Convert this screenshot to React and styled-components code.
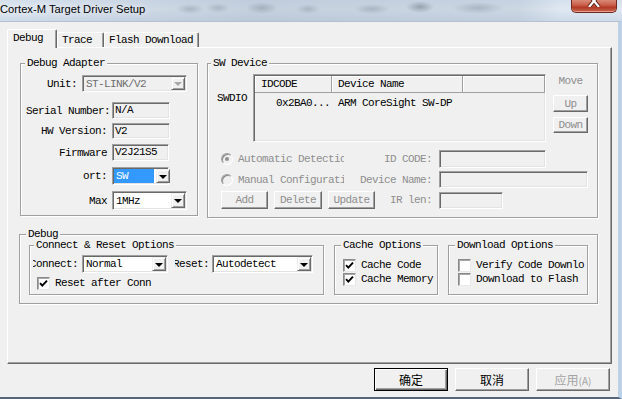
import React from "react";
import styled, { createGlobalStyle } from "styled-components";

const GlobalStyle = createGlobalStyle`
  html, body {
    margin: 0;
    padding: 0;
    background: #f0f0f0;
  }
  body {
    width: 622px;
    height: 399px;
    overflow: hidden;
  }
`;

const mono = `"Liberation Mono", "DejaVu Sans Mono", monospace`;
const cjk = `"Noto Sans CJK SC", "Liberation Sans", sans-serif`;
const grayText = "#8e8e8e";

const Window = styled.div`
  width: 622px;
  height: 399px;
  display: flex;
  flex-direction: column;
  overflow: hidden;
  font-family: ${mono};
  font-size: 11px;
  letter-spacing: -0.6px;
  color: #000;
`;

const TitleBar = styled.div`
  height: 21px;
  flex: none;
  display: flex;
  align-items: flex-start;
  background:
    radial-gradient(ellipse 14px 5px at 190px 9px, rgba(90, 100, 115, 0.28), transparent),
    radial-gradient(ellipse 12px 5px at 218px 8px, rgba(90, 100, 115, 0.25), transparent),
    radial-gradient(ellipse 16px 6px at 262px 8px, rgba(90, 100, 115, 0.3), transparent),
    radial-gradient(ellipse 12px 5px at 308px 9px, rgba(90, 100, 115, 0.25), transparent),
    radial-gradient(ellipse 18px 5px at 372px 9px, rgba(90, 100, 115, 0.28), transparent),
    radial-gradient(ellipse 14px 6px at 420px 7px, rgba(60, 70, 85, 0.35), transparent),
    radial-gradient(ellipse 26px 6px at 478px 8px, rgba(90, 100, 115, 0.28), transparent),
    linear-gradient(90deg, rgba(255, 255, 255, 0) 0, rgba(150, 165, 185, 0.25) 170px, rgba(150, 165, 185, 0.35) 250px, rgba(150, 165, 185, 0.25) 520px, rgba(255, 255, 255, 0) 560px),
    linear-gradient(180deg, #d6e1ee 0%, #dfe8f2 45%, #cfdbea 100%);
`;

const Title = styled.div`
  font-family: "Liberation Sans", "Noto Sans", sans-serif;
  font-size: 11.2px;
  letter-spacing: 0;
  line-height: 18px;
  color: #000;
  text-shadow: 0 0 6px rgba(255, 255, 255, 0.95);
`;

const CloseButton = styled.div`
  margin-left: auto;
  margin-right: 5px;
  width: 46px;
  height: 13px;
  box-sizing: border-box;
  border: 1px solid #6e2a22;
  border-top: none;
  border-radius: 0 0 5px 5px;
  background: linear-gradient(180deg, #d98a78 0%, #c75a44 45%, #b23a26 60%, #c8664f 100%);
  box-shadow: inset 0 -1px 0 rgba(255, 200, 180, 0.6);
  display: flex;
  justify-content: center;
  overflow: hidden;
`;

const Body = styled.div`
  flex: 1;
  display: flex;
  flex-direction: column;
  background: #f0f0f0;
  border-top: 1px solid #b4c1d0;
  border-right: 4px solid #bcd0e6;
  border-bottom: 2px solid #56657a;
  padding: 7px 6px 0 7px;
`;

const Tabs = styled.div`
  display: flex;
  align-items: flex-end;
  height: 18px;
  position: relative;
  z-index: 1;
`;

const Tab = styled.div`
  box-sizing: border-box;
  width: ${(p) => p.$w}px;
  height: ${(p) => (p.$active ? 19 : 15)}px;
  margin-bottom: ${(p) => (p.$active ? -1 : 0)}px;
  padding-left: ${(p) => p.$pad}px;
  line-height: ${(p) => (p.$active ? 17 : 14)}px;
  background: #f0f0f0;
  border: 1px solid;
  border-color: #fff #696969 transparent #fff;
  border-bottom: none;
  border-radius: 2px 2px 0 0;
  box-shadow: inset -1px 0 0 #a0a0a0;
  white-space: nowrap;
`;

const Panel = styled.div`
  box-sizing: border-box;
  width: 605px;
  height: 317px;
  border: 1px solid;
  border-color: #fff #696969 #696969 #fff;
  box-shadow: inset -1px -1px 0 #a0a0a0;
  display: flex;
  flex-direction: column;
`;

const TopRow = styled.div`
  display: flex;
  align-items: flex-start;
  gap: 9px;
  margin: 15px 0 0 12px;
`;

const Group = styled.div`
  box-sizing: border-box;
  width: ${(p) => p.$w}px;
  height: ${(p) => p.$h}px;
  flex: none;
  border: 1px solid #a0a0a0;
  box-shadow: inset 1px 1px 0 #fff, 1px 1px 0 #fff;
  display: flex;
  flex-direction: column;
`;

const Legend = styled.div`
  align-self: flex-start;
  margin: -7px 0 -5px ${(p) => p.$x}px;
  padding: 0 2px;
  height: 12px;
  line-height: 12px;
  background: #f0f0f0;
  white-space: nowrap;
`;

const FieldRow = styled.div`
  display: flex;
  align-items: center;
  margin-top: ${(p) => p.$top}px;
  margin-left: ${(p) => p.$left || 0}px;
  gap: ${(p) => p.$gap || 0}px;
`;

const Label = styled.div`
  width: ${(p) => p.$w}px;
  flex: none;
  text-align: right;
  white-space: nowrap;
  color: ${(p) => (p.$disabled ? grayText : "#000")};
`;

const ClipLabel = styled.div`
  width: ${(p) => p.$w}px;
  margin-left: ${(p) => p.$ml}px;
  flex: none;
  display: flex;
  justify-content: flex-end;
  overflow: hidden;
  white-space: nowrap;
`;

const Sunken = styled.div`
  box-sizing: border-box;
  width: ${(p) => p.$w}px;
  height: ${(p) => p.$h}px;
  margin-left: ${(p) => p.$ml || 0}px;
  flex: none;
  border: 1px solid;
  border-color: #a0a0a0 #fff #fff #a0a0a0;
  box-shadow: inset 1px 1px 0 #696969, inset -1px -1px 0 #e3e3e3;
`;

const TextField = styled(Sunken)`
  background: #f0f0f0;
  padding-left: 2px;
  line-height: ${(p) => p.$h - 2}px;
  white-space: nowrap;
  overflow: hidden;
`;

const ComboBox = styled(Sunken)`
  display: flex;
  align-items: stretch;
  padding: 1px;
  background: ${(p) => (p.$disabled ? "#f0f0f0" : "#fff")};
`;

const ComboText = styled.div`
  flex: ${(p) => (p.$sel ? "none" : 1)};
  width: ${(p) => (p.$sel ? "38px" : "auto")};
  margin-right: ${(p) => (p.$sel ? 2 : 0)}px;
  padding-left: 2px;
  white-space: nowrap;
  overflow: hidden;
  display: flex;
  align-items: center;
  background: ${(p) => (p.$sel ? "#3399ff" : "transparent")};
  color: ${(p) => (p.$sel ? "#fff" : p.$disabled ? "#6d6d6d" : "#000")};
`;

const DropArrow = styled.div`
  box-sizing: border-box;
  width: 14px;
  margin-left: auto;
  flex: none;
  background: #f0f0f0;
  border: 1px solid;
  border-color: #f0f0f0 #696969 #696969 #f0f0f0;
  box-shadow: inset 1px 1px 0 #fff, inset -1px -1px 0 #a0a0a0;
  display: flex;
  align-items: center;
  justify-content: center;

  &::after {
    content: "";
    border-left: 4px solid transparent;
    border-right: 4px solid transparent;
    border-top: 4px solid ${(p) => (p.$disabled ? "#a8a8a8" : "#000")};
    margin-top: 1px;
  }
`;

const Combo = ({ w, h, ml, disabled, selected, children }) => (
  <ComboBox $w={w} $h={h} $ml={ml} $disabled={disabled}>
    <ComboText $sel={selected} $disabled={disabled}>
      {children}
    </ComboText>
    <DropArrow $disabled={disabled} />
  </ComboBox>
);

const DeviceArea = styled.div`
  display: flex;
  align-items: flex-start;
  margin-top: 10px;
`;

const SideLabel = styled.div`
  width: 36px;
  margin-left: 9px;
  padding-top: 17px;
  line-height: 14px;
  flex: none;
`;

const List = styled(Sunken)`
  background: #f0f0f0;
  padding: 1px 0 0 1px;
  display: flex;
  flex-direction: column;
`;

const ListHeader = styled.div`
  display: flex;
  height: 17px;
`;

const HeaderCell = styled.div`
  box-sizing: border-box;
  width: ${(p) => (p.$w ? `${p.$w}px` : "auto")};
  flex: ${(p) => (p.$w ? "none" : 1)};
  padding-left: 6px;
  line-height: 16px;
  border-right: 1px solid #a0a0a0;
  border-bottom: 1px solid #a0a0a0;
  box-shadow: inset 1px 1px 0 #fff;
  white-space: nowrap;
`;

const ListRow = styled.div`
  display: flex;
  height: 16px;
  line-height: 16px;
  margin-top: 2px;
`;

const ListCell = styled.div`
  box-sizing: border-box;
  width: ${(p) => p.$w}px;
  flex: none;
  text-align: ${(p) => (p.$right ? "right" : "left")};
  padding: ${(p) => (p.$right ? "0 2px 0 0" : "0 0 0 6px")};
  white-space: nowrap;
`;

const MoveColumn = styled.div`
  width: 35px;
  margin-left: 7px;
  flex: none;
  display: flex;
  flex-direction: column;
`;

const MoveLabel = styled.div`
  line-height: 14px;
  text-align: center;
  color: ${grayText};
`;

const Btn = styled.button`
  box-sizing: border-box;
  width: ${(p) => p.$w}px;
  height: ${(p) => p.$h}px;
  margin: ${(p) => p.$top || 0}px 0 0 0;
  padding: 0;
  flex: none;
  font-family: ${mono};
  font-size: 11px;
  letter-spacing: -0.6px;
  color: ${grayText};
  background: #f0f0f0;
  border: 1px solid;
  border-color: #fff #696969 #696969 #fff;
  box-shadow: inset -1px -1px 0 #a0a0a0;
  white-space: nowrap;
`;

const DialogButton = styled(Btn)`
  font-family: ${cjk};
  font-size: 12px;
  letter-spacing: 0;
  color: ${(p) => (p.disabled ? "#a3a3a3" : "#000")};
  ${(p) =>
    p.$default &&
    `
    border: 1px solid #000;
    box-shadow: inset 1px 1px 0 #fff, inset -1px -1px 0 #696969, inset -2px -2px 0 #a0a0a0;
  `}
`;

const ConfigGrid = styled.div`
  display: grid;
  grid-template-columns: 123px 88px 156px;
  grid-template-rows: 19px 17px 18px;
  row-gap: 3px;
  align-items: center;
  margin: 7px 0 0 13px;
`;

const RadioItem = styled.div`
  width: 123px;
  overflow: hidden;
  display: flex;
  align-items: center;
  gap: 5px;
  white-space: nowrap;
  color: ${grayText};
`;

const Radio = styled.span`
  box-sizing: border-box;
  width: 12px;
  height: 12px;
  flex: none;
  border-radius: 50%;
  border: 1px solid;
  border-color: #a0a0a0 #fff #fff #a0a0a0;
  box-shadow: inset 1px 1px 0 #8a8a8a;
  background: #f0f0f0;
  display: flex;
  align-items: center;
  justify-content: center;

  &::after {
    content: "";
    width: 4px;
    height: 4px;
    border-radius: 50%;
    background: ${(p) => (p.$on ? "#8e8e8e" : "transparent")};
  }
`;

const ButtonRow = styled.div`
  display: flex;
  gap: 6px;
`;

const OptionsRow = styled.div`
  display: flex;
  gap: 10px;
  margin: 10px 0 0 9px;
`;

const CheckItem = styled.div`
  display: flex;
  align-items: center;
  gap: 5px;
  height: 13px;
  line-height: 13px;
  margin-top: ${(p) => p.$top}px;
  margin-left: ${(p) => p.$left}px;
  white-space: nowrap;
`;

const CheckBox = styled.span`
  box-sizing: border-box;
  width: 13px;
  height: 13px;
  flex: none;
  border: 1px solid;
  border-color: #8a8a8a #e8e8e8 #e8e8e8 #8a8a8a;
  box-shadow: inset 1px 1px 0 #a8a8a8;
  background: #fff;
  display: flex;
  align-items: center;
  justify-content: center;
`;

const Check = ({ checked, top, left, children }) => (
  <CheckItem $top={top} $left={left}>
    <CheckBox>
      {checked && (
        <svg width="11" height="11" viewBox="0 0 11 11">
          <path d="M2 5.2 L4.3 7.6 L9 2.6" fill="none" stroke="#000" strokeWidth="1.9" />
        </svg>
      )}
    </CheckBox>
    {children}
  </CheckItem>
);

const Footer = styled.div`
  display: flex;
  justify-content: flex-end;
  gap: 7px;
  margin-top: 4px;
  padding-right: 2px;
`;

const Small = styled.span`
  font-size: 10px;
`;

export default function App() {
  return (
    <>
      <GlobalStyle />
      <Window>
        <TitleBar>
          <Title>Cortex-M Target Driver Setup</Title>
          <CloseButton>
            <svg width="14" height="7" viewBox="0 5 14 7">
              <path d="M2 0 L12 12 M12 0 L2 12" stroke="#5a1e16" strokeWidth="4" />
              <path d="M2 0 L12 12 M12 0 L2 12" stroke="#fff" strokeWidth="2.2" />
            </svg>
          </CloseButton>
        </TitleBar>
        <Body>
          <Tabs>
            <Tab $active $w={50} $pad={5}>Debug</Tab>
            <Tab $w={47} $pad={4}>Trace</Tab>
            <Tab $w={95} $pad={4}>Flash Download</Tab>
          </Tabs>
          <Panel>
            <TopRow>
              <Group $w={178} $h={153}>
                <Legend $x={4}>Debug Adapter</Legend>
                <FieldRow $top={11} $gap={5}>
                  <Label $w={56}>Unit:</Label>
                  <Combo w={105} h={17} disabled>ST-LINK/V2</Combo>
                </FieldRow>
                <FieldRow $top={10} $gap={2}>
                  <Label $w={89}>Serial Number:</Label>
                  <TextField $w={58} $h={17}>N/A</TextField>
                </FieldRow>
                <FieldRow $top={4} $gap={5}>
                  <Label $w={86}>HW Version:</Label>
                  <TextField $w={58} $h={16}>V2</TextField>
                </FieldRow>
                <FieldRow $top={5} $gap={5}>
                  <Label $w={86}>Firmware</Label>
                  <TextField $w={57} $h={17}>V2J21S5</TextField>
                </FieldRow>
                <FieldRow $top={6} $gap={5}>
                  <Label $w={86}>ort:</Label>
                  <Combo w={57} h={18} selected>SW</Combo>
                </FieldRow>
                <FieldRow $top={6} $gap={5}>
                  <Label $w={86}>Max</Label>
                  <Combo w={75} h={19}>1MHz</Combo>
                </FieldRow>
              </Group>

              <Group $w={391} $h={155}>
                <Legend $x={3}>SW Device</Legend>
                <DeviceArea>
                  <SideLabel>SWDIO</SideLabel>
                  <List $w={293} $h={68}>
                    <ListHeader>
                      <HeaderCell $w={77}>IDCODE</HeaderCell>
                      <HeaderCell $w={131}>Device Name</HeaderCell>
                      <HeaderCell />
                    </ListHeader>
                    <ListRow>
                      <ListCell $w={77} $right>0x2BA0...</ListCell>
                      <ListCell $w={131}>ARM CoreSight SW-DP</ListCell>
                    </ListRow>
                  </List>
                  <MoveColumn>
                    <MoveLabel>Move</MoveLabel>
                    <Btn $w={35} $h={17} $top={7} disabled>Up</Btn>
                    <Btn $w={35} $h={16} $top={5} disabled>Down</Btn>
                  </MoveColumn>
                </DeviceArea>
                <ConfigGrid>
                  <RadioItem>
                    <Radio $on />
                    Automatic Detection
                  </RadioItem>
                  <Label $w={88} $disabled>ID CODE:</Label>
                  <TextField $w={107} $h={18} $ml={7} />

                  <RadioItem>
                    <Radio />
                    Manual Configuration
                  </RadioItem>
                  <Label $w={88} $disabled>Device Name:</Label>
                  <TextField $w={149} $h={17} $ml={7} />

                  <ButtonRow>
                    <Btn $w={47} $h={18} disabled>Add</Btn>
                    <Btn $w={48} $h={18} disabled>Delete</Btn>
                    <Btn $w={47} $h={18} disabled>Update</Btn>
                  </ButtonRow>
                  <Label $w={88} $disabled>IR len:</Label>
                  <TextField $w={64} $h={17} $ml={7} />
                </ConfigGrid>
              </Group>
            </TopRow>

            <FieldRow $top={16} $left={11}>
              <Group $w={579} $h={70}>
                <Legend $x={6}>Debug</Legend>
                <OptionsRow>
                  <Group $w={295} $h={50}>
                    <Legend $x={4}>Connect &amp; Reset Options</Legend>
                    <FieldRow $top={9}>
                      <ClipLabel $w={45} $ml={3}>Connect:</ClipLabel>
                      <Combo w={86} h={18} ml={4}>Normal</Combo>
                      <ClipLabel $w={34} $ml={7}>Reset:</ClipLabel>
                      <Combo w={101} h={18} ml={3}>Autodetect</Combo>
                    </FieldRow>
                    <Check checked top={4} left={7}>Reset after Conn</Check>
                  </Group>
                  <Group $w={104} $h={50}>
                    <Legend $x={6}>Cache Options</Legend>
                    <Check checked top={13} left={8}>Cache Code</Check>
                    <Check checked top={1} left={8}>Cache Memory</Check>
                  </Group>
                  <Group $w={140} $h={50}>
                    <Legend $x={6}>Download Options</Legend>
                    <Check top={13} left={9}>Verify Code Downlo</Check>
                    <Check top={1} left={9}>Download to Flash</Check>
                  </Group>
                </OptionsRow>
              </Group>
            </FieldRow>
          </Panel>
          <Footer>
            <DialogButton $w={74} $h={23} $default>确定</DialogButton>
            <DialogButton $w={74} $h={23}>取消</DialogButton>
            <DialogButton $w={74} $h={23} disabled>
              应用<Small>(A)</Small>
            </DialogButton>
          </Footer>
        </Body>
      </Window>
    </>
  );
}
